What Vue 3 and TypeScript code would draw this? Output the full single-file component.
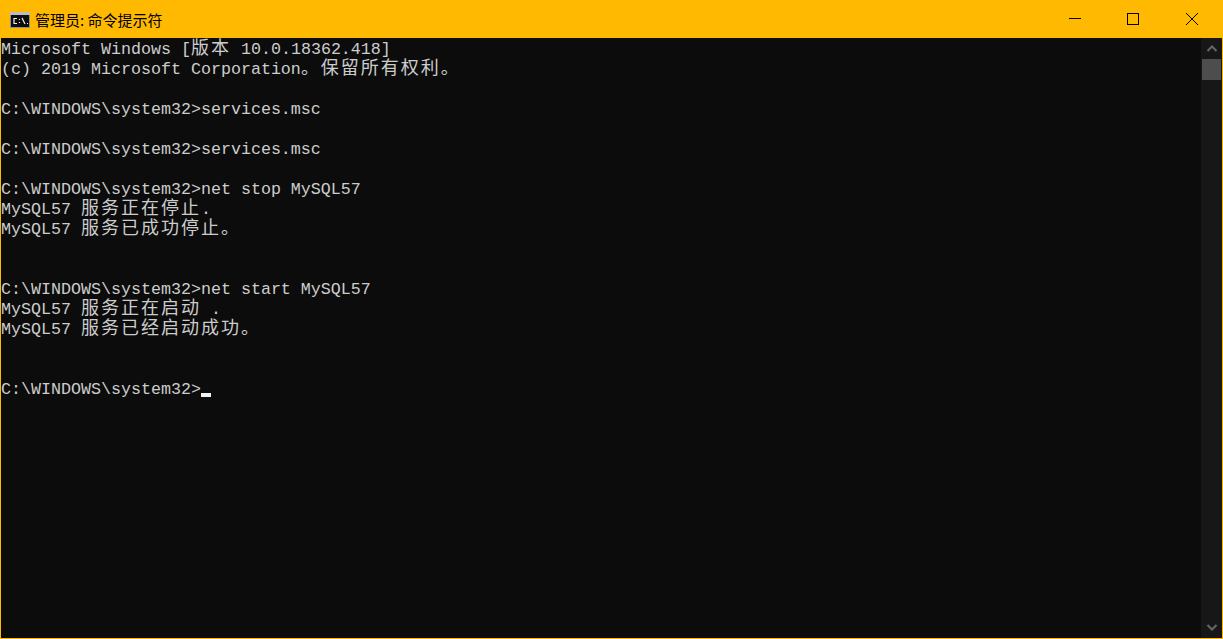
<script setup lang="ts">
interface Segment {
  text: string
  cjk: boolean
}

const lines: string[] = [
  'Microsoft Windows [版本 10.0.18362.418]',
  '(c) 2019 Microsoft Corporation。保留所有权利。',
  '',
  'C:\\WINDOWS\\system32>services.msc',
  '',
  'C:\\WINDOWS\\system32>services.msc',
  '',
  'C:\\WINDOWS\\system32>net stop MySQL57',
  'MySQL57 服务正在停止.',
  'MySQL57 服务已成功停止。',
  '',
  '',
  'C:\\WINDOWS\\system32>net start MySQL57',
  'MySQL57 服务正在启动 .',
  'MySQL57 服务已经启动成功。',
  '',
  '',
]

function split(line: string): Segment[] {
  const parts = line.match(/[\u3000-\u9fff]+|[^\u3000-\u9fff]+/g) ?? []
  return parts.map((text) => ({ text, cjk: /[\u3000-\u9fff]/.test(text) }))
}

const rows = lines.map(split)
</script>

<template>
  <div class="window">
    <header class="titlebar">
      <svg class="app-icon" width="20" height="16" viewBox="0 0 20 16">
        <rect x="0" y="0" width="20" height="16" fill="#8f8f8f" />
        <rect x="0" y="0" width="20" height="3" fill="#bdbdbd" />
        <rect x="1" y="3" width="18" height="12" fill="#0e0e0e" />
        <path d="M7 6.5H4v5h3M9.5 7v1M9.5 10v1M12 6l3 6M17 11.5h1" stroke="#f0f0f0" stroke-width="1.2" fill="none" />
      </svg>
      <span class="title">管理员: 命令提示符</span>
      <div class="controls">
        <button class="control" aria-label="最小化">
          <svg width="12" height="12" viewBox="0 0 12 12"><path d="M0 5.5h12" stroke="#000" fill="none" /></svg>
        </button>
        <button class="control" aria-label="最大化">
          <svg width="12" height="12" viewBox="0 0 12 12"><rect x="0.5" y="0.5" width="11" height="11" stroke="#000" fill="none" /></svg>
        </button>
        <button class="control close" aria-label="关闭">
          <svg width="12" height="12" viewBox="0 0 12 12"><path d="M0 0l12 12M12 0L0 12" stroke="#000" fill="none" /></svg>
        </button>
      </div>
    </header>
    <main class="body">
      <div class="console">
        <div v-for="(row, i) in rows" :key="i" class="line">
          <span v-for="(seg, j) in row" :key="j" :class="{ cjk: seg.cjk }">{{ seg.text }}</span>
        </div>
        <div class="line">C:\WINDOWS\system32&gt;<span class="cursor"></span></div>
      </div>
      <aside class="scrollbar">
        <svg class="arrow" width="10" height="7" viewBox="0 0 10 7"><path d="M0.5 6L5 1.5L9.5 6" stroke="#666" stroke-width="2" fill="none" /></svg>
        <div class="track"><div class="thumb"></div></div>
        <svg class="arrow" width="10" height="7" viewBox="0 0 10 7"><path d="M0.5 1L5 5.5L9.5 1" stroke="#666" stroke-width="2" fill="none" /></svg>
      </aside>
    </main>
  </div>
</template>

<style>
html,
body {
  margin: 0;
  overflow: hidden;
}
</style>

<style scoped>
.window {
  width: 1223px;
  height: 639px;
  box-sizing: border-box;
  display: flex;
  flex-direction: column;
  border: 1px solid #ffb900;
  border-top: 0;
  background: #0c0c0c;
}
.titlebar {
  height: 38px;
  flex: none;
  display: flex;
  align-items: center;
  background: #ffb900;
  padding-left: 9px;
}
.app-icon {
  flex: none;
  margin-top: 1px;
}
.title {
  margin-left: 5px;
  font: 15px "Noto Sans CJK SC", sans-serif;
  color: #000;
}
.controls {
  margin-left: auto;
  display: flex;
}
.control {
  width: 58px;
  height: 38px;
  padding: 0;
  border: 0;
  background: transparent;
  display: flex;
  align-items: center;
  justify-content: center;
}
.control.close {
  width: 60px;
}
.body {
  flex: 1;
  min-height: 0;
  display: flex;
}
.console {
  flex: 1;
  color: #cccccc;
  font-family: "Liberation Mono", monospace;
  font-size: 16.667px;
}
.line {
  height: 20px;
  line-height: 24px;
  white-space: pre;
}
.cjk {
  font-family: "Noto Sans CJK SC", sans-serif;
  font-size: 18px;
  line-height: 0;
  letter-spacing: 2px;
}
.cursor {
  display: inline-block;
  width: 10px;
  height: 4px;
  background: #f2f2f2;
  vertical-align: -3px;
}
.scrollbar {
  width: 21px;
  flex: none;
  background: #171717;
  display: flex;
  flex-direction: column;
  align-items: center;
}
.arrow {
  flex: none;
  margin: 7px 0;
}
.track {
  flex: 1;
  width: 100%;
}
.thumb {
  width: 19px;
  height: 21px;
  margin: 0 auto;
  background: #4d4d4d;
}
</style>
